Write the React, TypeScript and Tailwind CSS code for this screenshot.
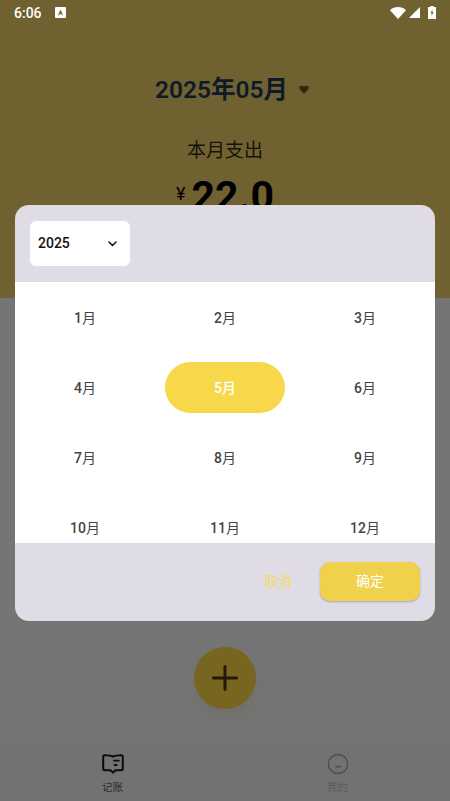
import React from "react";

const months = ["1", "2", "3", "4", "5", "6", "7", "8", "9", "10", "11", "12"];

const StatusBar = () => (
  <div className="flex h-[25px] items-center pl-[14px] pr-[14px] text-white">
    <span className="text-[14px] font-medium leading-none">6:06</span>
    <svg className="ml-[13px]" width="11" height="11" viewBox="0 0 11 11">
      <rect width="11" height="11" rx="1" fill="#fff" />
      <path d="M3 8.2 5.5 2.5 8 8.2H6.9L6.4 7H4.6L4.1 8.2Z" fill="#6f6230" />
    </svg>
    <svg className="ml-auto" width="16" height="12" viewBox="0 0 16 12">
      <path d="M0 3.2C2 1.2 5 0 8 0s6 1.2 8 3.2L8 12Z" fill="#fff" />
    </svg>
    <svg className="ml-[3px]" width="11" height="11" viewBox="0 0 11 11">
      <path d="M11 0V11H0Z" fill="#fff" />
    </svg>
    <svg className="ml-[8px]" width="8" height="13" viewBox="0 0 8 13">
      <path d="M2.5 0H5.5V1H8V13H0V1H2.5Z" fill="#fff" />
      <path d="M4.6 3 2.6 7.4H3.9L3.4 10.6 5.5 6H4.2Z" fill="#6f6230" />
    </svg>
  </div>
);

const Summary = () => (
  <div className="h-[298px] overflow-hidden bg-[#6f6230]">
    <StatusBar />
    <div className="ml-[14px] mt-[48px] flex items-center justify-center">
      <span className="text-[24.5px] font-semibold leading-[34px] text-[#0e1a2a]">2025年05月</span>
      <svg className="ml-[11px]" width="10" height="8" viewBox="0 0 10 8">
        <path d="M0 1.5Q0 0 1.5 0H8.5Q10 0 10 1.5Q9 4 5 8Q1 4 0 1.5Z" fill="#33290d" />
      </svg>
    </div>
    <div className="mt-[30px] text-center text-[19px] leading-[28px] text-[#15130a]">本月支出</div>
    <div className="mt-[6px] flex items-center justify-center">
      <span className="mb-[4px] mr-[6px] text-[18px] leading-none text-black">¥</span>
      <span className="text-[41px] font-bold leading-[50px] text-black">22.0</span>
    </div>
  </div>
);

const BottomNav = () => (
  <div className="flex h-[56px] bg-[#727272]">
    <div className="flex w-[225px] flex-col items-center pt-[9px]">
      <svg width="22" height="20" viewBox="0 0 22 20" fill="none" stroke="#0d0c08" strokeWidth="2" strokeLinejoin="round" strokeLinecap="round">
        <path d="M11 2.6C9.5 1.6 6 1.2 2.8 1.2 1.8 1.2 1.2 1.8 1.2 2.8V14.6C1.2 15.6 1.8 16.2 2.8 16.2H8.5L11 18.6 13.5 16.2H19.2C20.2 16.2 20.8 15.6 20.8 14.6V2.8C20.8 1.8 20.2 1.2 19.2 1.2 16 1.2 12.5 1.6 11 2.6Z" />
        <path d="M12 6.7H16.8M12.6 11H14.6" strokeWidth="1.8" />
      </svg>
      <span className="mt-[5px] text-[10.5px] leading-[18px] text-[#2a2a27]">记账</span>
    </div>
    <div className="flex w-[225px] flex-col items-center pt-[8px]">
      <svg width="22" height="22" viewBox="0 0 22 22" fill="none" stroke="#4f4f4f" strokeWidth="1.5" strokeLinecap="round">
        <circle cx="11" cy="11" r="9.6" />
        <path d="M8.8 13C9.6 14.2 12.4 14.2 13.2 13" />
      </svg>
      <span className="mt-[4px] text-[10.5px] leading-[18px] text-[#5a5a5a]">我的</span>
    </div>
  </div>
);

const MonthDialog = () => (
  <div className="absolute left-[15px] top-[205px] w-[420px] overflow-hidden rounded-[14px] bg-[#dfdce6]">
    <div className="h-[77px] px-[15px] pt-[16px]">
      <div className="flex h-[45px] w-[100px] items-center justify-between rounded-[6px] bg-white pl-[8px] pr-[13px]">
        <span className="text-[14px] font-medium text-[#111]">2025</span>
        <svg width="9" height="6" viewBox="0 0 9 6" fill="none" stroke="#111" strokeWidth="1.5" strokeLinecap="round" strokeLinejoin="round">
          <path d="M1 1 4.5 4.5 8 1" />
        </svg>
      </div>
    </div>
    <div className="grid h-[261px] grid-cols-3 content-start overflow-hidden bg-white pt-[1px]">
      {months.map((m) => (
        <div key={m} className="flex h-[70px] items-center justify-center">
          {m === "5" ? (
            <div className="mb-[1px] flex h-[51px] w-[120px] items-center justify-center rounded-full bg-[#f6d84a] pt-[1px] text-[14px] font-medium text-white">{m}月</div>
          ) : (
            <span className="text-[14px] text-[#444]">
              <span className="font-medium">{m}</span>月
            </span>
          )}
        </div>
      ))}
    </div>
    <div className="flex h-[78px] items-start justify-end pr-[15px] pt-[19px]">
      <span className="mr-[28px] text-[14px] leading-[39px] text-[#f5d96b]">取消</span>
      <button className="h-[39px] w-[100px] rounded-[10px] bg-[#efd14c] text-[14px] text-white shadow-[0_1px_2px_rgba(90,90,150,0.45)]">确定</button>
    </div>
  </div>
);

export default function App() {
  return (
    <div className="relative flex h-[801px] w-[450px] flex-col overflow-hidden bg-[#757575] font-['Roboto','Noto_Sans_CJK_SC',sans-serif]">
      <Summary />
      <div className="flex flex-1 flex-col items-center justify-end pb-[36px]">
        <div className="flex h-[62px] w-[62px] items-center justify-center rounded-full bg-[#786520] shadow-[0_8px_14px_rgba(100,95,70,0.25)]">
          <svg width="26" height="26" viewBox="0 0 26 26" stroke="#21190a" strokeWidth="3" strokeLinecap="round">
            <path d="M13 1.5V24.5M1.5 13H24.5" />
          </svg>
        </div>
      </div>
      <BottomNav />
      <MonthDialog />
    </div>
  );
}
